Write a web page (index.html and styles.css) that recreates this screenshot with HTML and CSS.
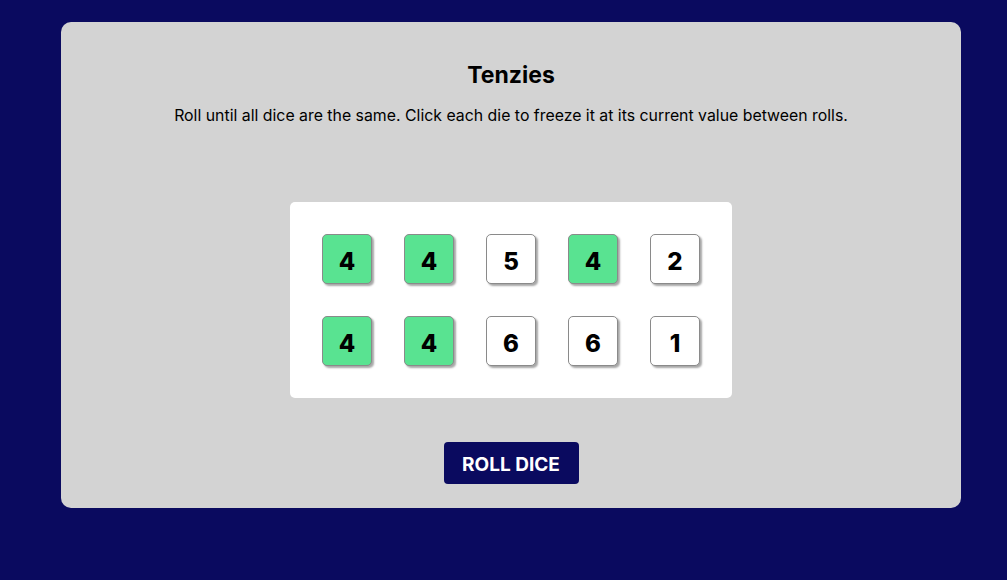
FILE: index.html
```html
<!DOCTYPE html>
<html>
<head>
<meta charset="utf-8">
<link rel="stylesheet" href="styles.css">
</head>
<body>
<main class="card">
  <h1 class="title">Tenzies</h1>
  <p class="instructions">Roll until all dice are the same. Click each die to freeze it at its current value between rolls.</p>
  <div class="dice-box">
    <button class="die held">4</button>
    <button class="die held">4</button>
    <button class="die">5</button>
    <button class="die held">4</button>
    <button class="die">2</button>
    <button class="die held">4</button>
    <button class="die held">4</button>
    <button class="die">6</button>
    <button class="die">6</button>
    <button class="die">1</button>
  </div>
  <button class="roll">ROLL DICE</button>
</main>
</body>
</html>
```
FILE: styles.css
```css
html, body {
  margin: 0;
  padding: 0;
}
body {
  background: #0a0a5f;
  font-family: Inter, "Liberation Sans", sans-serif;
  height: 580px;
  overflow: hidden;
}
.card {
  box-sizing: border-box;
  width: 900px;
  margin: 22px 0 0 61px;
  height: 486px;
  background: #d3d3d3;
  border-radius: 10px;
  display: flex;
  flex-direction: column;
  align-items: center;
}
.title {
  margin: 40px 0 0;
  font-size: 23px;
  line-height: 26px;
  font-weight: 700;
  color: #000;
}
.instructions {
  margin: 18px 0 0;
  font-size: 15.85px;
  line-height: 20px;
  color: #000;
}
.dice-box {
  margin-top: 76px;
  background: #fff;
  border-radius: 5px;
  padding: 32px;
  display: grid;
  grid-template-columns: repeat(5, 50px);
  gap: 32px;
}
.die {
  box-sizing: border-box;
  width: 50px;
  height: 50px;
  padding: 4px 0 0;
  border: 1px solid #8a8a8a;
  border-radius: 5px;
  background: #fff;
  box-shadow: 2px 2px 2px rgba(0, 0, 0, 0.35);
  font-family: Inter, "Liberation Sans", sans-serif;
  font-size: 24px;
  font-weight: 800;
  color: #000;
  display: flex;
  align-items: center;
  justify-content: center;
}
.die.held {
  background: #59e391;
}
.roll {
  margin-top: 44px;
  width: 135px;
  height: 42px;
  border: none;
  border-radius: 4px;
  background: #0a0a5f;
  color: #fff;
  font-family: Inter, "Liberation Sans", sans-serif;
  font-size: 19px;
  font-weight: 700;
  padding: 3px 0 0;
}
```
